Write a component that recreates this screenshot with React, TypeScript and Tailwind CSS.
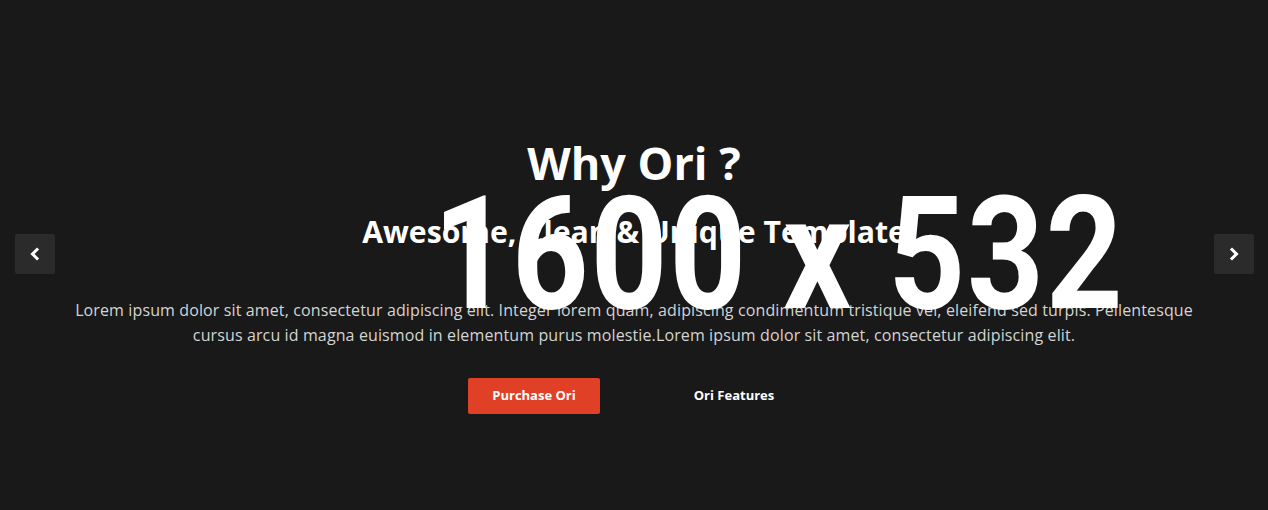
import React from "react";

function Chevron({ dir }: { dir: "left" | "right" }) {
  return (
    <svg width="12" height="14" viewBox="0 0 12 14" fill="none">
      {dir === "left" ? (
        <path d="M8 2.5 L3.5 7 L8 11.5" stroke="white" strokeWidth="3" strokeLinecap="square" strokeLinejoin="miter" />
      ) : (
        <path d="M4 2.5 L8.5 7 L4 11.5" stroke="white" strokeWidth="3" strokeLinecap="square" strokeLinejoin="miter" />
      )}
    </svg>
  );
}

export default function App() {
  return (
    <div
      className="relative w-full h-[510px] bg-[#191919] overflow-hidden"
      style={{ fontFamily: '"Open Sans", "Liberation Sans", sans-serif' }}
    >
      <div className="flex flex-col items-center pt-[133px]">
        <h1 className="text-[45px] leading-[60px] font-bold text-white">Why Ori ?</h1>
        <h2 className="mt-[19px] text-[30.2px] leading-[40px] font-bold text-white">
          Awesome, Clean &amp; Unique Template
        </h2>
        <p className="mt-[46px] w-[1140px] text-center text-[16px] leading-[25px] tracking-[0.12px] text-[#d4d4d4]">
          Lorem ipsum dolor sit amet, consectetur adipiscing elit. Integer lorem quam, adipiscing condimentum tristique vel, eleifend sed turpis. Pellentesque cursus arcu id magna euismod in elementum purus molestie.Lorem ipsum dolor sit amet, consectetur adipiscing elit.
        </p>
        <div className="mt-[30px] flex gap-[68px]">
          <button className="w-[132px] h-[36px] rounded-[2px] bg-[#e04026] text-white text-[13px] font-bold">
            Purchase Ori
          </button>
          <button className="w-[132px] h-[36px] rounded-[2px] text-white text-[13px] font-bold">
            Ori Features
          </button>
        </div>
      </div>

      <div
        className="absolute left-[433px] top-[175px] text-white font-bold text-[158px] leading-[158px] whitespace-nowrap origin-left scale-x-[0.85] tracking-[2px]"
        style={{ fontFamily: 'Roboto, "Liberation Sans", sans-serif' }}
      >
        1600 x 532
      </div>

      <button className="absolute left-[15px] top-[234px] w-[40px] h-[40px] rounded-[2px] bg-[#2b2b2b] flex items-center justify-center">
        <Chevron dir="left" />
      </button>
      <button className="absolute right-[14px] top-[234px] w-[40px] h-[40px] rounded-[2px] bg-[#2b2b2b] flex items-center justify-center">
        <Chevron dir="right" />
      </button>
    </div>
  );
}
